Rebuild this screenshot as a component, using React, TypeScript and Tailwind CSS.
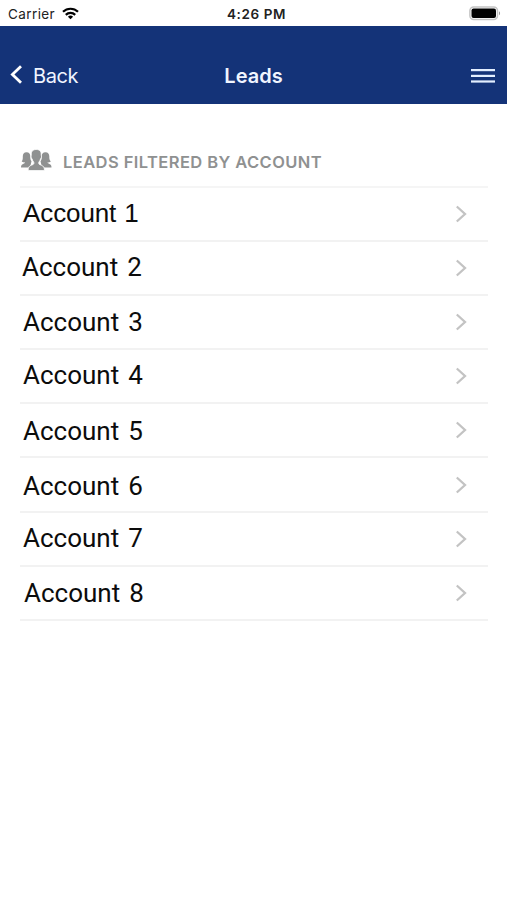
import React from "react";

interface Account {
  id: number;
  name: string;
  textClass: string;
}

const accounts: Account[] = [
  { id: 1, name: "Account 1", textClass: "font-['Liberation_Sans',sans-serif] text-[26px] tracking-[-0.1px] [word-spacing:1px] pl-[3px] pb-[2px]" },
  { id: 2, name: "Account 2", textClass: "font-[Roboto,sans-serif] text-[26px] [word-spacing:2.5px] pl-[2px] pb-px" },
  { id: 3, name: "Account 3", textClass: "font-[Roboto,sans-serif] text-[26px] [word-spacing:2.5px] pl-[3px]" },
  { id: 4, name: "Account 4", textClass: "font-[Roboto,sans-serif] text-[26px] [word-spacing:2.5px] pl-[3px] pb-[3px]" },
  { id: 5, name: "Account 5", textClass: "font-[Roboto,sans-serif] text-[26px] [word-spacing:2.5px] pl-[3px] pt-[2px]" },
  { id: 6, name: "Account 6", textClass: "font-[Roboto,sans-serif] text-[26px] [word-spacing:2.5px] pl-[3px] pt-[2px]" },
  { id: 7, name: "Account 7", textClass: "font-[Roboto,sans-serif] text-[26px] [word-spacing:2.5px] pl-[3px] pb-[2px]" },
  { id: 8, name: "Account 8", textClass: "font-[Roboto,sans-serif] text-[26px] [word-spacing:2.5px] pl-[4px]" },
];

const StatusBar: React.FC = () => (
  <div className="grid h-[26px] grid-cols-3 items-center bg-white pl-[8px] pr-[6px] pt-px text-[#222]">
    <div className="flex items-center gap-[7px]">
      <span className="text-[13.5px] leading-4 tracking-[0.4px]">Carrier</span>
      <svg width="17" height="13" viewBox="0 0 17 13" fill="none" stroke="#000" strokeWidth="2.2">
        <path d="M1 4.8a10.7 10.7 0 0 1 15 0" />
        <path d="M3.8 7.9a6.7 6.7 0 0 1 9.4 0" />
        <path d="M8.5 12.3 5.9 9.7a3.7 3.7 0 0 1 5.2 0z" fill="#000" stroke="none" />
      </svg>
    </div>
    <span className="whitespace-nowrap pl-[4px] text-center text-[13.5px] font-semibold leading-4 tracking-[0.6px]">4:26 PM</span>
    <svg className="justify-self-end" width="32" height="15" viewBox="0 0 32 15">
      <rect x="0.9" y="0.9" width="27.6" height="12.6" rx="3.8" fill="#fff" stroke="#c4c4c4" strokeWidth="1.5" />
      <rect x="2.5" y="2.5" width="24.5" height="9.5" rx="2" fill="#000" />
      <path d="M30 5.2c1.4.6 1.4 3.4 0 4z" fill="#999" />
    </svg>
  </div>
);

const NavBar: React.FC = () => (
  <header className="-mt-[0.5px] grid h-[78px] grid-cols-3 items-end bg-[#143378] pb-[14px] pl-[10px] pr-[12px] text-[#f0f5ff]">
    <button className="flex items-center gap-[10px] text-left">
      <svg width="13" height="20" viewBox="0 0 13 20" fill="none" stroke="#fff" strokeWidth="2.8">
        <path d="M11 1.2 2.4 9.4 11 17.8" />
      </svg>
      <span className="pt-px text-[20px] leading-7 tracking-[-0.4px]">Back</span>
    </button>
    <h1 className="pl-[2px] text-center text-[20px] font-semibold leading-7">Leads</h1>
    <button className="flex h-7 items-center justify-self-end" aria-label="Menu">
      <svg width="24" height="16" viewBox="0 0 24 16" fill="#e3eeff">
        <rect y="1" width="24" height="2.2" />
        <rect y="6.8" width="24" height="2.2" />
        <rect y="12.4" width="24" height="2.2" />
      </svg>
    </button>
  </header>
);

const GroupIcon: React.FC = () => (
  <svg className="mb-px" width="32" height="22" viewBox="0 0 32 22" fill="#8f9191">
    <path d="M6.500 3.200c2.700 0 3.900 1.800 3.800 4.300-.1 2 .2 3.500 1.200 4.700L10 18.600H1c0-2 .5-3 2.200-3.600 1-.4 1.700-.7 1.900-1.400-1.200-.1-2.500-.4-3.400-1.100C3 11 2.800 9.200 2.800 7.500c0-2.500 1.100-4.300 3.700-4.300z" />
    <path d="M25.500 3.200c-2.700 0-3.900 1.800-3.800 4.300.1 2-.2 3.500-1.200 4.700l1.500 6.400h9.500c0-2-.5-3-2.200-3.600-1-.4-1.700-.7-1.900-1.400 1.200-.1 2.500-.4 3.400-1.100-1.600-1.500-1.500-3.300-1.500-5 0-2.500-1.200-4.300-3.800-4.300z" />
    <path
      d="M16.200.5c3.800 0 5.300 2.200 5 5.600 0 .6.500.9.300 2-.2 1-.8 1.300-1 1.900-.4 1.400-.9 2.400-1.700 3.200v1.500c.3.800 1.500 1.100 2.700 1.600 2.200.9 2.800 2 3 5.300H8.100c.2-3.300.8-4.400 3-5.300 1.200-.5 2.400-.8 2.700-1.600v-1.500c-.8-.8-1.300-1.800-1.700-3.200-.3-.6-.9-.9-1-1.900-.2-1.100.3-1.400.2-2C11 2.700 12.500.5 16.200.5z"
      stroke="#fff"
      strokeWidth="0.8"
    />
  </svg>
);

const AccountRow: React.FC<{ account: Account }> = ({ account }) => (
  <li className="flex h-[54.2px] items-center justify-between border-b-2 border-[#f2f2f2] pr-[20px]">
    <span className={`whitespace-nowrap leading-8 text-[#0c0c0c] ${account.textClass}`}>{account.name}</span>
    <svg width="13" height="18" viewBox="0 0 13 18" fill="none" stroke="#c3c3c3" strokeWidth="2.3">
      <path d="m1.800 1.500 8.200 7.500-8.200 7.500" />
    </svg>
  </li>
);

const App: React.FC = () => {
  return (
    <div className="min-h-[900px] w-full bg-white font-[Inter,sans-serif]">
      <StatusBar />
      <NavBar />
      <main className="pl-[20px] pr-[19px]">
        <div className="flex h-[84px] items-end gap-[11px] border-b-2 border-[#f5f5f5] pb-[14px] text-[#8f9191]">
          <GroupIcon />
          <h2 className="whitespace-nowrap text-[16.5px] font-semibold leading-5 tracking-[0.42px]">LEADS FILTERED BY ACCOUNT</h2>
        </div>
        <ul>
          {accounts.map((account) => (
            <AccountRow key={account.id} account={account} />
          ))}
        </ul>
      </main>
    </div>
  );
};

export default App;
